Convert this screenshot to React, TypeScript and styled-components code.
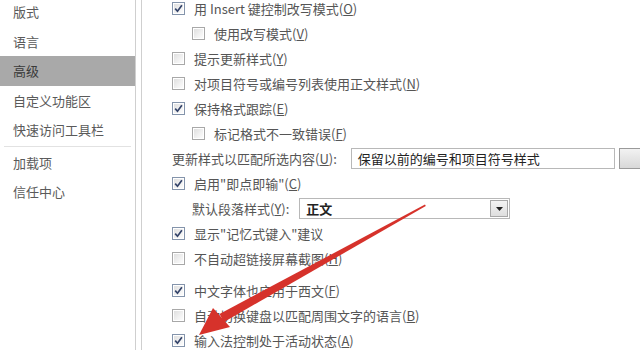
import React from "react";
import styled, { createGlobalStyle } from "styled-components";

const Global = createGlobalStyle`
  html, body { margin: 0; padding: 0; background: #fff; }
  body { font-family: "Noto Sans CJK SC", "Open Sans", sans-serif; }
`;

const Root = styled.div`
  position: relative;
  width: 640px;
  height: 350px;
  overflow: hidden;
  background: #fff;
  display: flex;
  font-family: "Noto Sans CJK SC", "Open Sans", sans-serif;
  font-size: 13px;
  color: #555;
`;

const Sidebar = styled.nav`
  width: 135px;
  flex: none;
  border-right: 1px solid #cfcfcf;
  display: flex;
  flex-direction: column;
  margin-top: -3px;
`;

const NavItem = styled.div<{ $active?: boolean }>`
  height: 29.5px;
  display: flex;
  align-items: center;
  padding-left: 13px;
  font-size: 13px;
  background: ${(p) => (p.$active ? "#a9a9a9" : "transparent")};
  color: ${(p) => (p.$active ? "#3a3a3a" : "#5a5a5a")};
`;

const NavSep = styled.div`
  height: 1px;
  margin: 1px 4px;
  background: #e2e2e2;
`;

const Content = styled.main`
  margin-left: 5px;
  flex: 1;
  border-left: 1px solid #cfcfcf;
  display: flex;
  flex-direction: column;
  padding-left: 30px;
  margin-top: -4px;
`;

const Row = styled.div<{ $indent?: number; $gapTop?: number }>`
  height: 25px;
  flex: none;
  display: flex;
  align-items: center;
  gap: 9px;
  padding-left: ${(p) => (p.$indent || 0) * 20}px;
  margin-top: ${(p) => p.$gapTop || 0}px;
  white-space: nowrap;
`;

const Box = styled.span<{ $checked?: boolean }>`
  width: 11px;
  height: 11px;
  flex: none;
  border: 1px solid ${(p) => (p.$checked ? "#8494ab" : "#a8a8a8")};
  background: linear-gradient(135deg, #dcdcdc 0%, #f2f2f2 60%, #fff 100%);
  box-shadow: inset 0 0 0 1px #fff;
  display: flex;
  align-items: center;
  justify-content: center;
`;

const Label = styled.span`
  color: #555;
  font-size: 13px;
`;

const Field = styled.div<{ $width: number; $bold?: boolean; $offset?: number }>`
  width: ${(p) => p.$width}px;
  height: 21px;
  margin-left: ${(p) => p.$offset || 0}px;
  border: 1px solid #b8b8b8;
  background: #fff;
  display: flex;
  align-items: center;
  padding-left: 6px;
  box-sizing: border-box;
  color: #222;
  font-size: 13px;
  font-weight: ${(p) => (p.$bold ? 700 : 400)};
  position: relative;
`;

const DropBtn = styled.span`
  position: absolute;
  right: 1px;
  top: 1px;
  bottom: 1px;
  width: 18px;
  background: linear-gradient(#f4f4f4, #dedede);
  border: 1px solid #a8a8a8;
  box-sizing: border-box;
  display: flex;
  align-items: center;
  justify-content: center;
`;

const SideBtn = styled.span`
  width: 22px;
  height: 21px;
  margin-left: -5px;
  border: 1px solid #9a9a9a;
  background: linear-gradient(#f2f2f2, #d8d8d8);
  box-sizing: border-box;
  flex: none;
`;

const Overlay = styled.svg`
  position: absolute;
  left: 0;
  top: 0;
  pointer-events: none;
`;

const Check = () => (
  <svg width="9" height="9" viewBox="0 0 9 9">
    <path d="M1.2 4.6 L3.5 7.2 L7.9 1.2" fill="none" stroke="#34446a" strokeWidth="1.7" />
  </svg>
);

const CB = ({ checked }: { checked?: boolean }) => (
  <Box $checked={checked}>{checked ? <Check /> : null}</Box>
);

const K = ({ k }: { k: string }) => (
  <>
    (<u>{k}</u>)
  </>
);

const navItems = ["版式", "语言", "高级", "自定义功能区", "快速访问工具栏"];
const navItems2 = ["加载项", "信任中心"];

export default function App() {
  return (
    <Root>
      <Global />
      <Sidebar>
        {navItems.map((n) => (
          <NavItem key={n} $active={n === "高级"}>
            {n}
          </NavItem>
        ))}
        <NavSep />
        {navItems2.map((n) => (
          <NavItem key={n}>{n}</NavItem>
        ))}
      </Sidebar>
      <Content>
        <Row>
          <CB checked />
          <Label>
            用 Insert 键控制改写模式<K k="O" />
          </Label>
        </Row>
        <Row $indent={1}>
          <CB />
          <Label>
            使用改写模式<K k="V" />
          </Label>
        </Row>
        <Row>
          <CB />
          <Label>
            提示更新样式<K k="Y" />
          </Label>
        </Row>
        <Row>
          <CB />
          <Label>
            对项目符号或编号列表使用正文样式<K k="N" />
          </Label>
        </Row>
        <Row>
          <CB checked />
          <Label>
            保持格式跟踪<K k="E" />
          </Label>
        </Row>
        <Row $indent={1}>
          <CB />
          <Label>
            标记格式不一致错误<K k="F" />
          </Label>
        </Row>
        <Row>
          <Label>
            更新样式以匹配所选内容<K k="U" />:
          </Label>
          <Field $width={264} $offset={5}>保留以前的编号和项目符号样式</Field>
          <SideBtn />
        </Row>
        <Row>
          <CB checked />
          <Label>
            启用"即点即输"<K k="C" />
          </Label>
        </Row>
        <Row $indent={1}>
          <Label>
            默认段落样式<K k="Y" />:
          </Label>
          <Field $width={211} $bold $offset={1}>
            正文
            <DropBtn>
              <svg width="7" height="4" viewBox="0 0 7 4">
                <path d="M0 0 H7 L3.5 4 Z" fill="#222" />
              </svg>
            </DropBtn>
          </Field>
        </Row>
        <Row>
          <CB checked />
          <Label>显示"记忆式键入"建议</Label>
        </Row>
        <Row>
          <CB />
          <Label>
            不自动超链接屏幕截图<K k="H" />
          </Label>
        </Row>
        <Row $gapTop={7}>
          <CB checked />
          <Label>
            中文字体也应用于西文<K k="F" />
          </Label>
        </Row>
        <Row>
          <CB />
          <Label>
            自动切换键盘以匹配周围文字的语言<K k="B" />
          </Label>
        </Row>
        <Row>
          <CB checked />
          <Label>
            输入法控制处于活动状态<K k="A" />
          </Label>
        </Row>
      </Content>
      <Overlay width="640" height="350" viewBox="0 0 640 350">
        <polygon points="425,204.5 425.8,206 224,322 219.5,314" fill="#d6322b" />
        <polygon points="199,335 213,308 230,327" fill="#d6322b" />
      </Overlay>
    </Root>
  );
}
